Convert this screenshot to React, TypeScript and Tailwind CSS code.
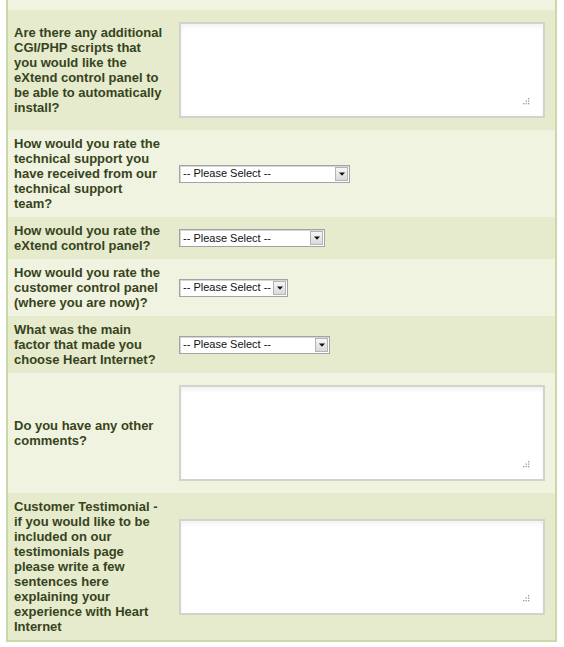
const font = "font-['Liberation_Sans',Arial,sans-serif]"

interface Question {
    label: string
    kind: "textarea" | "select"
    selectWidth?: number
}

const questions: Question[] = [
    { label: "Are there any additional CGI/PHP scripts that you would like the eXtend control panel to be able to automatically install?", kind: "textarea" },
    { label: "How would you rate the technical support you have received from our technical support team?", kind: "select", selectWidth: 171 },
    { label: "How would you rate the eXtend control panel?", kind: "select", selectWidth: 146 },
    { label: "How would you rate the customer control panel (where you are now)?", kind: "select", selectWidth: 109 },
    { label: "What was the main factor that made you choose Heart Internet?", kind: "select", selectWidth: 151 },
    { label: "Do you have any other comments?", kind: "textarea" },
    { label: "Customer Testimonial - if you would like to be included on our testimonials page please write a few sentences here explaining your experience with Heart Internet", kind: "textarea" },
]

function Grip() {
    const dots = [[6, 0], [6, 2.5], [3.5, 2.5], [6, 5], [3.5, 5], [1, 5]]
    return (
        <svg width="8" height="7" viewBox="0 0 8 7" className="pointer-events-none absolute bottom-[13px] right-[15px]">
            {dots.map(([x, y], i) => (
                <rect key={i} x={x} y={y} width="1.3" height="1.3" fill="#9a9a9a" />
            ))}
        </svg>
    )
}

function TextBox() {
    return (
        <div className="relative">
            <textarea className="block w-[366px] h-[96px] resize-none bg-white border-2 border-[#d2d3cc] shadow-[inset_0_3px_4px_rgba(0,0,0,0.05)] outline-none" />
            <Grip />
        </div>
    )
}

function FakeSelect({ width }: { width: number }) {
    return (
        <div style={{ width }} className={`flex items-center justify-between h-[18px] bg-white border border-[#a3a3a3] shadow-[inset_1px_1px_0_#d6d6d6] ${font}`}>
            <span className="pl-[3px] text-[11px] leading-none text-[#111] whitespace-nowrap">-- Please Select --</span>
            <span className="flex items-center justify-center w-[13px] h-[14px] mr-[1px] border border-[#b4b4b4] bg-gradient-to-b from-[#f6f6f6] to-[#d9d9d9]">
                <svg width="6" height="4" viewBox="0 0 6 4">
                    <path d="M0 0.5h6L3 3.8z" fill="#111" />
                </svg>
            </span>
        </div>
    )
}

export default function App() {
    return (
        <div className="w-[564px] min-h-[647px] bg-white">
            <div className={`ml-[6px] w-[551px] border-x-2 border-b-2 border-[#cbd8a8] ${font}`}>
                <div className="h-[10px] bg-[#eff3df]" />
                {questions.map((q, index) => (
                    <div key={index} className={`flex items-center ${index % 2 === 0 ? "bg-[#e5ebcc]" : "bg-[#eff3df]"}`}>
                        <div className="w-[171px] shrink-0 pl-[6px] pr-[16px] py-[6px] text-[13px] leading-[15px] font-bold text-[#374320]">
                            {q.label}
                        </div>
                        <div className={q.kind === "textarea" ? "py-[12px]" : "py-[6px]"}>
                            {q.kind === "textarea" ? <TextBox /> : <FakeSelect width={q.selectWidth ?? 150} />}
                        </div>
                    </div>
                ))}
            </div>
        </div>
    )
}
